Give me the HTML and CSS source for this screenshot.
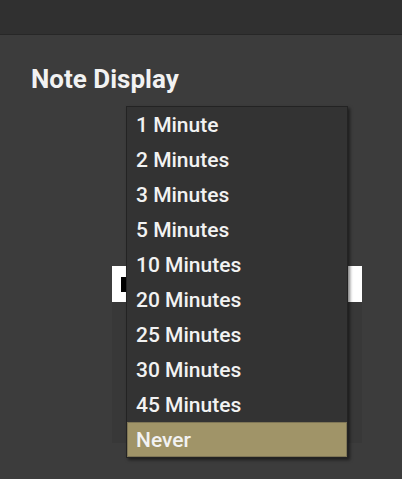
FILE: index.html
```html
<!DOCTYPE html>
<html lang="en">

<head>
    <meta charset="UTF-8">
    <meta name="viewport" content="width=device-width, initial-scale=1.0">
    <title>Note Display</title>
    <link rel="stylesheet" href="styles.css">
</head>

<body>
    <header class="topbar"></header>

    <main class="settings">
        <h1>Note Display</h1>

        <div class="field">
            <div class="select-box">
                <span class="swatch"></span>
            </div>
            <div class="panel"></div>

            <ul class="dropdown">
                <li>1 Minute</li>
                <li>2 Minutes</li>
                <li>3 Minutes</li>
                <li>5 Minutes</li>
                <li>10 Minutes</li>
                <li>20 Minutes</li>
                <li>25 Minutes</li>
                <li>30 Minutes</li>
                <li>45 Minutes</li>
                <li class="selected">Never</li>
            </ul>
        </div>
    </main>
</body>

</html>
```

FILE: styles.css
```css
body {
    font-family: Roboto, "Liberation Sans", sans-serif;
    background-color: #3c3c3c;
    color: #f2f2f2;
    margin: 0;
    height: 100vh;
    overflow: hidden;
}

.topbar {
    height: 34px;
    background-color: #303030;
    border-bottom: 1px solid #272727;
}

.settings {
    padding: 27px 31px 0;
}

h1 {
    font-size: 26px;
    font-weight: 700;
    margin: 0;
    line-height: 34px;
}

.field {
    position: relative;
    margin: 170px 0 0 81px;
    width: 250px;
}

.select-box {
    height: 36px;
    background-color: #fff;
    display: flex;
    align-items: center;
}

.swatch {
    width: 12px;
    height: 15px;
    margin-left: 9px;
    background-color: #000;
}

.panel {
    height: 141px;
    background-color: #383838;
}

.dropdown {
    position: absolute;
    left: 14px;
    top: -160px;
    width: 220px;
    margin: 0;
    padding: 0;
    list-style-type: none;
    background-color: #333;
    border: 1px solid #232323;
    box-shadow: 2px 2px 3px rgba(0, 0, 0, 0.5);
}

.dropdown li {
    box-sizing: border-box;
    height: 35px;
    padding: 2px 0 0 9px;
    line-height: 33px;
    font-size: 21px;
    font-weight: 500;
}

.dropdown li.selected {
    background-color: #a09468;
    box-shadow: inset 0 0 0 1px #7f7656;
}
```
